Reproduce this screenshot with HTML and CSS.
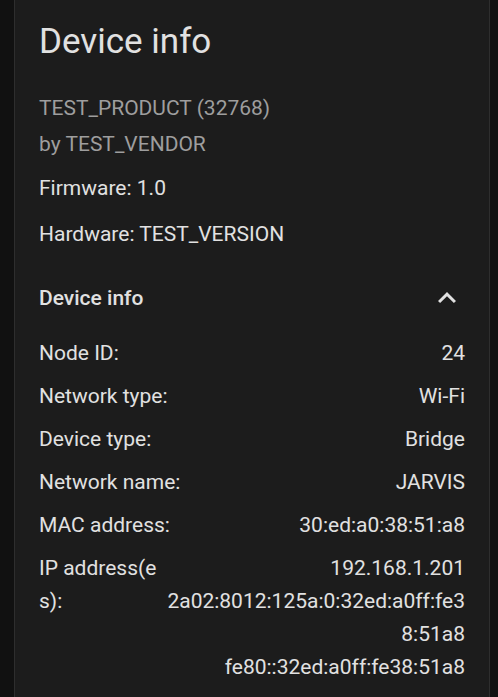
FILE: index.html
```html
<!DOCTYPE html>
<html>
<head>
<meta charset="utf-8">
<link rel="stylesheet" href="styles.css">
</head>
<body>
<div class="card">
  <h1 class="title">Device info</h1>
  <div class="product">TEST_PRODUCT (32768)</div>
  <div class="product">by TEST_VENDOR</div>
  <div class="spec-list">
    <div class="spec">Firmware: 1.0</div>
    <div class="spec">Hardware: TEST_VERSION</div>
  </div>
  <div class="section-header">
    <span class="section-title">Device info</span>
    <svg class="chevron" viewBox="0 0 24 24"><path d="M7.41,15.41L12,10.83L16.59,15.41L18,14L12,8L6,14L7.41,15.41Z"/></svg>
  </div>
  <div class="rows">
    <div class="row"><span class="label">Node ID:</span><span class="value">24</span></div>
    <div class="row"><span class="label">Network type:</span><span class="value">Wi-Fi</span></div>
    <div class="row"><span class="label">Device type:</span><span class="value">Bridge</span></div>
    <div class="row"><span class="label">Network name:</span><span class="value">JARVIS</span></div>
    <div class="row"><span class="label">MAC address:</span><span class="value">30:ed:a0:38:51:a8</span></div>
    <div class="row"><span class="label">IP address(es):</span><span class="value">192.168.1.201<br>2a02:8012:125a:0:32ed:a0ff:fe38:51a8<br>fe80::32ed:a0ff:fe38:51a8</span></div>
  </div>
</div>
</body>
</html>
```
FILE: styles.css
```css
html, body {
  margin: 0;
  padding: 0;
  background: #111111;
  font-family: Roboto, "Liberation Sans", sans-serif;
  color: #e1e1e1;
  overflow: hidden;
}
.card {
  margin: -12px 0 0 14px;
  width: 476px;
  background: #1c1c1c;
  border: 1px solid #2e2e2e;
  border-radius: 12px;
  padding: 29px 24px 40px 24px;
  height: 800px;
  box-sizing: border-box;
}
.title {
  margin: 0;
  font-size: 35px;
  font-weight: 400;
  line-height: 48px;
  color: #e1e1e1;
}
.product {
  font-size: 21px;
  line-height: 36px;
  color: #9e9e9e;
}
.product:first-of-type {
  margin-top: 24px;
}
.spec-list {
  margin-top: 3px;
}
.spec {
  font-size: 21px;
  line-height: 46px;
}
.section-header {
  margin-top: 17px;
  height: 48px;
  display: flex;
  align-items: center;
  justify-content: space-between;
}
.section-title {
  font-size: 21px;
  font-weight: 500;
}
.chevron {
  width: 36px;
  height: 36px;
  fill: #e1e1e1;
}
.rows {
  margin-top: 10px;
}
.row {
  display: flex;
  justify-content: space-between;
  padding: 5px 0;
  font-size: 21px;
  line-height: 33px;
  gap: 2px;
}
.label {
  flex: 0 1 auto;
  word-break: break-all;
  line-break: anywhere;
}
.value {
  flex: 0 1 auto;
  text-align: right;
  word-break: break-all;
}
```
